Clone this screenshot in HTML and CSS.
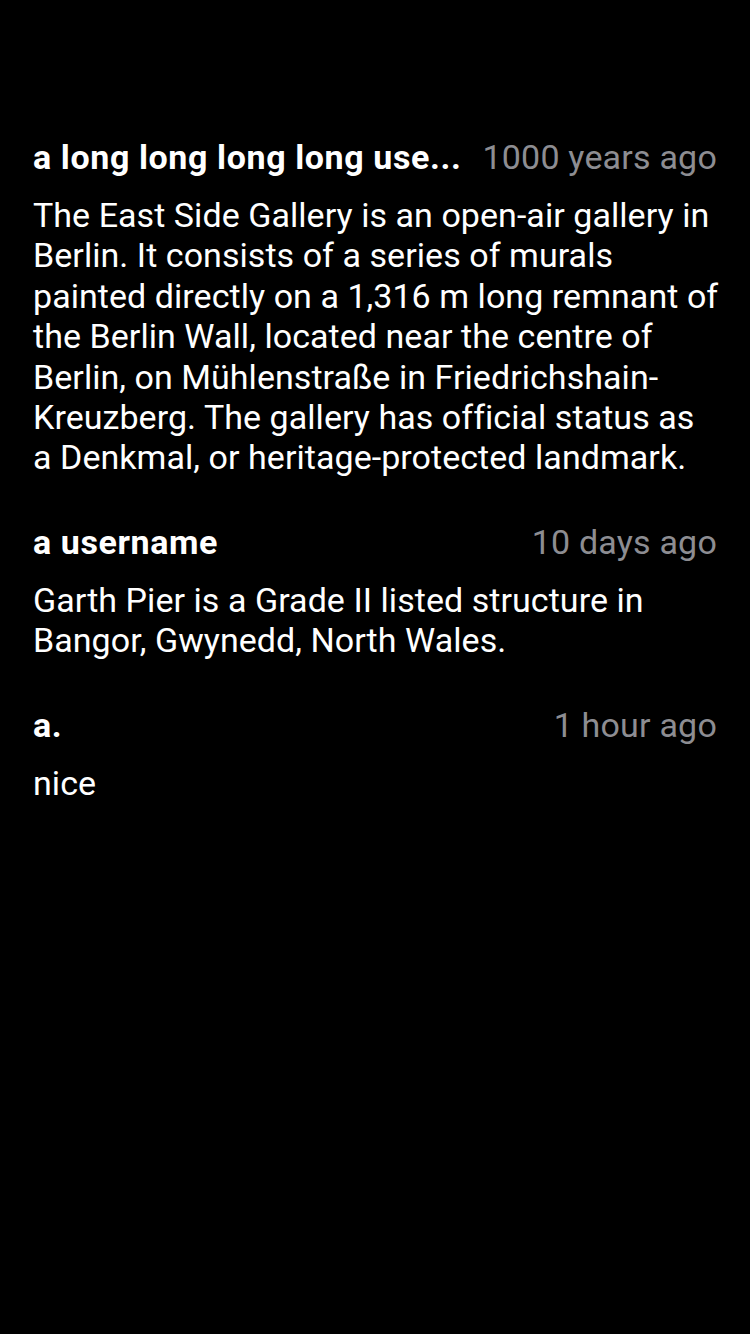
FILE: index.html
```html
<!DOCTYPE html>
<html>
<head>
<meta charset="utf-8">
<link rel="stylesheet" href="styles.css">
</head>
<body>
<main class="list">
  <article class="comment">
    <header class="comment-head">
      <span class="user">a long long long long use...</span>
      <span class="time">1000 years ago</span>
    </header>
    <p class="body">The East Side Gallery is an open-air gallery in Berlin. It consists of a series of murals painted directly on a 1,316 m long remnant of the Berlin Wall, located near the centre of Berlin, on Mühlenstraße in Friedrichshain-Kreuzberg. The gallery has official status as a Denkmal, or heritage-protected landmark.</p>
  </article>
  <article class="comment">
    <header class="comment-head">
      <span class="user">a username</span>
      <span class="time">10 days ago</span>
    </header>
    <p class="body">Garth Pier is a Grade II listed structure in Bangor, Gwynedd, North Wales.</p>
  </article>
  <article class="comment">
    <header class="comment-head">
      <span class="user">a.</span>
      <span class="time">1 hour ago</span>
    </header>
    <p class="body">nice</p>
  </article>
</main>
</body>
</html>
```
FILE: styles.css
```css
html, body {
  margin: 0;
  padding: 0;
  background: #000;
}
body {
  width: 750px;
  height: 1334px;
  color: #fff;
  font-family: Roboto, "Liberation Sans", sans-serif;
  -webkit-font-smoothing: antialiased;
}
.list {
  display: flex;
  flex-direction: column;
  gap: 44px;
  padding: 137px 33px 0 33px;
}
.comment {
  display: flex;
  flex-direction: column;
  gap: 17px;
}
.comment-head {
  display: flex;
  align-items: center;
  gap: 20px;
  height: 40px;
  font-size: 34px;
  line-height: 40px;
  letter-spacing: 0.2px;
}
.user {
  flex: 1 1 auto;
  min-width: 0;
  font-weight: 700;
  letter-spacing: 0.6px;
  white-space: nowrap;
  overflow: hidden;
  text-overflow: ellipsis;
}
.time {
  flex: 0 0 auto;
  margin-left: auto;
  color: #8d8d92;
}
.body {
  margin: 0 -2px 0 0;
  padding-top: 1px;
  font-size: 34px;
  line-height: 40.4px;
  letter-spacing: 0.05px;
}
```
